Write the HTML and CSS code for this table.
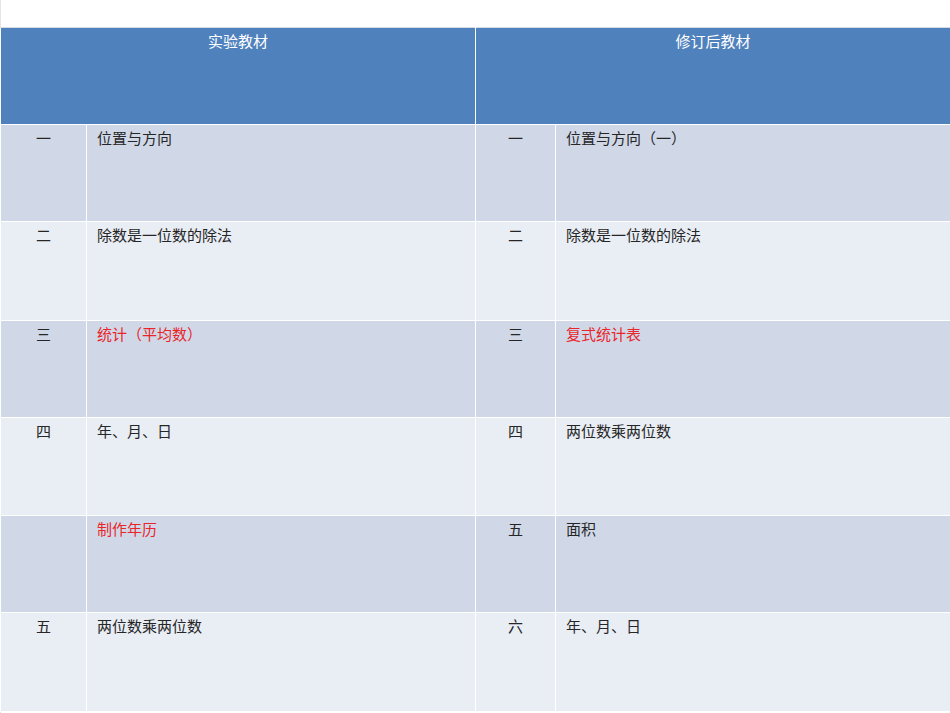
FILE: index.html
```html
<!DOCTYPE html>
<html lang="zh">
<head>
<meta charset="utf-8">
<link rel="stylesheet" href="styles.css">
</head>
<body>
<div class="page">
<table class="cmp">
<colgroup><col class="c1"><col class="c2"><col class="c3"><col class="c4"></colgroup>
<thead>
<tr class="head"><th colspan="2">实验教材</th><th colspan="2">修订后教材</th></tr>
</thead>
<tbody>
<tr class="odd h97"><td class="num">一</td><td>位置与方向</td><td class="num">一</td><td>位置与方向（一）</td></tr>
<tr class="even h99"><td class="num">二</td><td>除数是一位数的除法</td><td class="num">二</td><td>除数是一位数的除法</td></tr>
<tr class="odd h97"><td class="num">三</td><td class="red">统计（平均数）</td><td class="num">三</td><td class="red">复式统计表</td></tr>
<tr class="even h98"><td class="num">四</td><td>年、月、日</td><td class="num">四</td><td>两位数乘两位数</td></tr>
<tr class="odd h97"><td class="num"></td><td class="red">制作年历</td><td class="num">五</td><td>面积</td></tr>
<tr class="even h99"><td class="num">五</td><td>两位数乘两位数</td><td class="num">六</td><td>年、月、日</td></tr>
</tbody>
</table>
</div>
</body>
</html>
```

FILE: styles.css
```css
html, body {
  margin: 0;
  padding: 0;
  background: #ffffff;
}
.page {
  padding-top: 27px;
  width: 950px;
  height: 713px;
  box-sizing: border-box;
  border-left: 1px solid #e4e4e4;
}
.cmp {
  width: 950px;
  margin-left: -1px;
  border-collapse: collapse;
  table-layout: fixed;
  font-family: "Noto Sans CJK SC", "Noto Sans", sans-serif;
  font-size: 15px;
  line-height: 22px;
  color: #262626;
}
.c1 { width: 86px; }
.c2 { width: 389px; }
.c3 { width: 80px; }
.c4 { width: 395px; }
.cmp th, .cmp td {
  border: 1px solid #ffffff;
  vertical-align: top;
  padding: 2px 0 3px 10px;
  text-align: left;
  font-weight: 400;
}
.head th {
  background: #4f81bd;
  color: #ffffff;
  height: 91px;
  text-align: center;
  padding-left: 0;
  border-top-color: #d5dbe6;
}
.cmp td.num {
  text-align: center;
  padding-left: 0;
}
.odd td { background: #d0d8e8; }
.even td { background: #e9edf4; }
.h97 td { height: 91px; }
.h98 td { height: 92px; }
.h99 td { height: 93px; }
.red { color: #e8262a; }
```
